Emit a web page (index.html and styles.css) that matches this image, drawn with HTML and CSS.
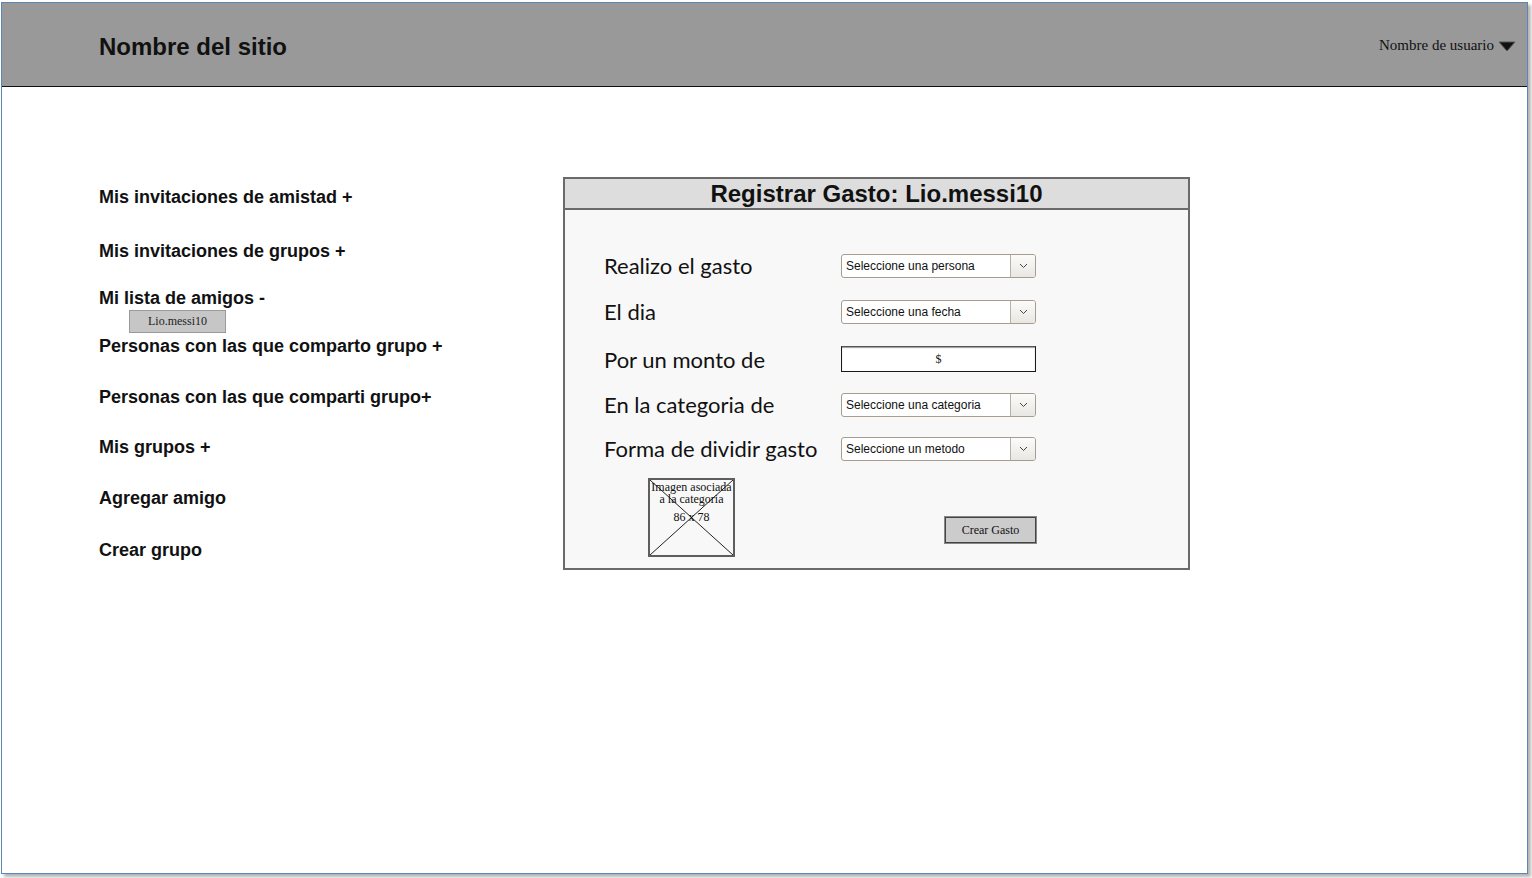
FILE: index.html
```html
<!DOCTYPE html>
<html lang="es">
<head>
<meta charset="utf-8">
<title>Registrar Gasto</title>
<link rel="stylesheet" href="styles.css">
</head>
<body>
<div class="frame">
  <header class="topbar">
    <div class="site-name">Nombre del sitio</div>
    <div class="user">
      <span class="user-name">Nombre de usuario</span>
      <svg class="user-caret" width="18" height="11" viewBox="0 0 18 11"><polygon points="1,1 17,1 9,10" fill="#111" stroke="#555" stroke-width="1"/></svg>
    </div>
  </header>
  <main class="main">
    <nav class="nav">
      <div class="nav-item n1">Mis invitaciones de amistad +</div>
      <div class="nav-item n2">Mis invitaciones de grupos +</div>
      <div class="nav-item n3">Mi lista de amigos -</div>
      <div class="friend">Lio.messi10</div>
      <div class="nav-item n4">Personas con las que comparto grupo +</div>
      <div class="nav-item n5">Personas con las que comparti grupo+</div>
      <div class="nav-item n6">Mis grupos +</div>
      <div class="nav-item n7">Agregar amigo</div>
      <div class="nav-item n8">Crear grupo</div>
    </nav>
    <section class="panel">
      <div class="panel-title">Registrar Gasto: Lio.messi10</div>
      <div class="panel-body">
        <div class="form">
          <div class="label">Realizo el gasto</div>
          <div class="select"><span class="select-text">Seleccione una persona</span><span class="select-btn"><svg width="9" height="6" viewBox="0 0 9 6"><polyline points="1,1 4.5,4.5 8,1" fill="none" stroke="#444" stroke-width="1"/></svg></span></div>
          <div class="label">El dia</div>
          <div class="select"><span class="select-text">Seleccione una fecha</span><span class="select-btn"><svg width="9" height="6" viewBox="0 0 9 6"><polyline points="1,1 4.5,4.5 8,1" fill="none" stroke="#444" stroke-width="1"/></svg></span></div>
          <div class="label label-tall">Por un monto de</div>
          <div class="money">$</div>
          <div class="label">En la categoria de</div>
          <div class="select"><span class="select-text">Seleccione una categoria</span><span class="select-btn"><svg width="9" height="6" viewBox="0 0 9 6"><polyline points="1,1 4.5,4.5 8,1" fill="none" stroke="#444" stroke-width="1"/></svg></span></div>
          <div class="label">Forma de dividir gasto</div>
          <div class="select"><span class="select-text">Seleccione un metodo</span><span class="select-btn"><svg width="9" height="6" viewBox="0 0 9 6"><polyline points="1,1 4.5,4.5 8,1" fill="none" stroke="#444" stroke-width="1"/></svg></span></div>
          <div class="image-cell">
            <div class="placeholder">
              <svg class="placeholder-x" width="83" height="75" viewBox="0 0 83 75" preserveAspectRatio="none"><line x1="0" y1="0" x2="83" y2="75" stroke="#222" stroke-width="1"/><line x1="83" y1="0" x2="0" y2="75" stroke="#222" stroke-width="1"/></svg>
              <div class="placeholder-text">Imagen asociada a la categoria<span class="dims">86 x 78</span></div>
            </div>
          </div>
          <div class="button-cell"><div class="btn">Crear Gasto</div></div>
        </div>
      </div>
    </section>
  </main>
</div>
</body>
</html>
```
FILE: styles.css
```css
* { box-sizing: border-box; }
html, body { margin: 0; padding: 0; }
body {
  background: #ffffff;
  width: 1532px;
  height: 878px;
  overflow: hidden;
}
.frame {
  margin: 2px 0 0 1px;
  width: 1527px;
  height: 872px;
  border: 1px solid #5b86b6;
  background: #ffffff;
  box-shadow: 3px 3px 3px #b4b4b4;
  display: flex;
  flex-direction: column;
}
.topbar {
  height: 84px;
  flex: none;
  background: #999999;
  border-bottom: 1px solid #111;
  display: flex;
  align-items: center;
  justify-content: space-between;
  padding: 4px 10px 0 97px;
}
.site-name {
  font-family: "Liberation Sans", Arial, sans-serif;
  font-weight: bold;
  font-size: 24px;
  color: #111;
}
.user {
  display: flex;
  align-items: center;
  gap: 4px;
  margin-top: -3px;
  margin-right: 1px;
}
.user-name {
  font-family: "Liberation Serif", "Times New Roman", serif;
  font-size: 15px;
  color: #111;
}
.user-caret { margin-top: 2px; }
.main {
  display: flex;
  padding-top: 90px;
  flex: 1;
}
.nav {
  width: 561px;
  padding-left: 97px;
  display: flex;
  flex-direction: column;
  align-items: flex-start;
  font-family: "Liberation Sans", Arial, sans-serif;
  font-weight: bold;
  font-size: 18px;
  color: #111;
}
.nav-item { line-height: 20px; white-space: nowrap; }
.n1 { margin-top: 10px; }
.n2 { margin-top: 34px; }
.n3 { margin-top: 27px; }
.n4 { margin-top: 3px; }
.n5 { margin-top: 31px; }
.n6 { margin-top: 30px; }
.n7 { margin-top: 31px; }
.n8 { margin-top: 32px; }
.friend {
  margin: 2px 0 0 30px;
  width: 97px;
  height: 23px;
  background: #c6c6c6;
  border: 1px solid #9a9a9a;
  font-family: "Liberation Serif", "Times New Roman", serif;
  font-weight: normal;
  font-size: 12px;
  color: #222;
  display: flex;
  align-items: center;
  justify-content: center;
}
.panel {
  width: 627px;
  height: 393px;
  border: 2px solid #6a6a6a;
  background: #f8f8f8;
  display: flex;
  flex-direction: column;
}
.panel-title {
  height: 31px;
  flex: none;
  background: #dddddd;
  border-bottom: 2px solid #6a6a6a;
  font-family: "Liberation Sans", Arial, sans-serif;
  font-weight: bold;
  font-size: 24px;
  color: #111;
  text-align: center;
  line-height: 29px;
}
.panel-body {
  padding: 44px 0 0 39px;
}
.form {
  display: grid;
  grid-template-columns: 237px 195px;
  grid-template-rows: 46px 46px 47px 44px 41px auto;
  align-items: start;
}
.label {
  font-family: Lato, "Open Sans", sans-serif;
  font-size: 22px;
  color: #111;
  line-height: 24px;
  white-space: nowrap;
}
.label-tall { line-height: 27px; }
.select {
  height: 24px;
  border: 1px solid #a69d8e;
  border-radius: 3px;
  background: #ffffff;
  display: flex;
  align-items: stretch;
  overflow: hidden;
}
.select-text {
  flex: 1;
  font-family: "Liberation Sans", Arial, sans-serif;
  font-size: 12px;
  color: #111;
  padding-left: 4px;
  display: flex;
  align-items: center;
}
.select-btn {
  width: 25px;
  border-left: 1px solid #b9b1a4;
  background: linear-gradient(#fbfbfa, #e9e7e3);
  display: flex;
  align-items: center;
  justify-content: center;
}
.money {
  height: 26px;
  border: 1px solid #1a1a1a;
  border-top-color: #555;
  box-shadow: inset 0 1px 1px #999;
  background: #ffffff;
  font-family: "Liberation Serif", "Times New Roman", serif;
  font-size: 12px;
  color: #111;
  display: flex;
  align-items: center;
  justify-content: center;
}
.image-cell {
  padding-left: 44px;
}
.placeholder {
  position: relative;
  width: 87px;
  height: 79px;
  border: 2px solid #5e5e5e;
  background: #f8f8f8;
}
.placeholder-x {
  position: absolute;
  left: 0;
  top: 0;
}
.placeholder-text {
  position: absolute;
  left: -2px;
  right: -2px;
  top: 1px;
  font-family: "Liberation Serif", "Times New Roman", serif;
  font-size: 12px;
  line-height: 12px;
  color: #111;
  text-align: center;
}
.dims {
  display: block;
  margin-top: 6px;
}
.button-cell {
  align-self: end;
  display: flex;
  justify-content: flex-end;
  margin-right: 0;
  margin-bottom: 14px;
}
.btn {
  width: 91px;
  height: 26px;
  background: #cccccc;
  border: 1px solid #444;
  box-shadow: 0 0 0 1px #888;
  font-family: "Liberation Serif", "Times New Roman", serif;
  font-size: 12px;
  color: #111;
  display: flex;
  align-items: center;
  justify-content: center;
}
```
